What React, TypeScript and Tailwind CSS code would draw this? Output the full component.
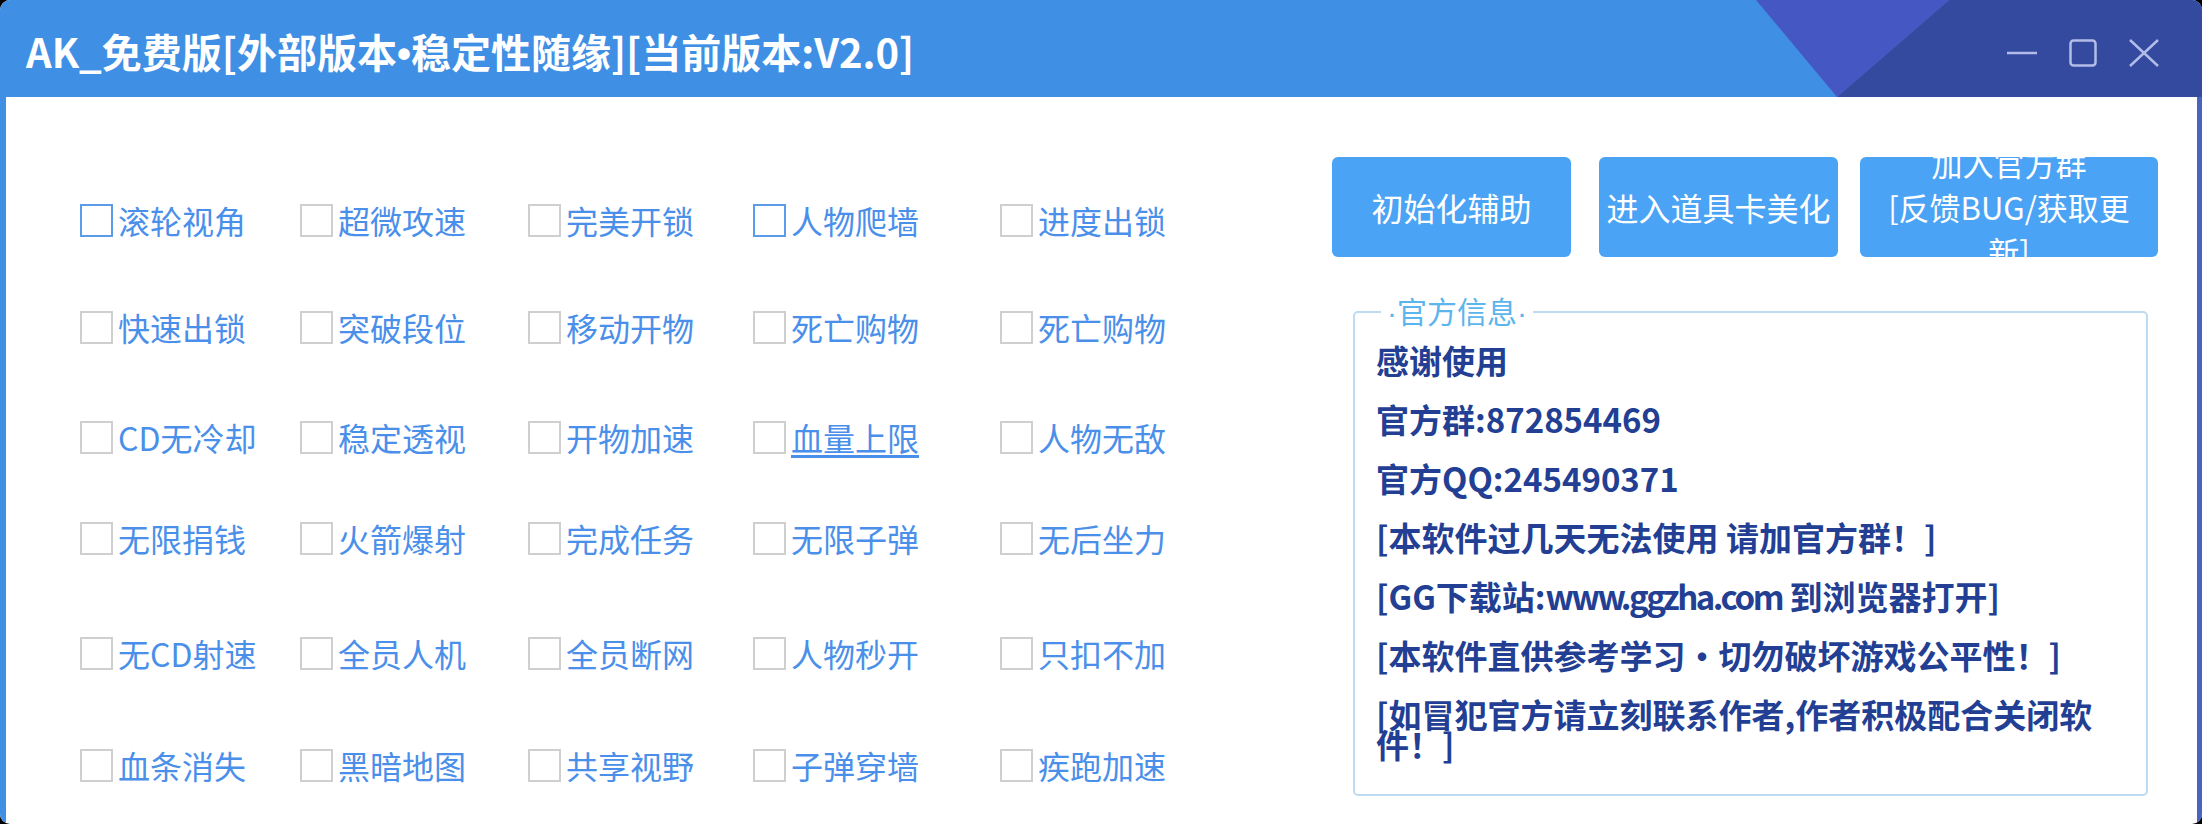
import React from "react";

const ROWS: string[][] = [
  ["滚轮视角", "超微攻速", "完美开锁", "人物爬墙", "进度出锁"],
  ["快速出锁", "突破段位", "移动开物", "死亡购物", "死亡购物"],
  ["CD无冷却", "稳定透视", "开物加速", "血量上限", "人物无敌"],
  ["无限捐钱", "火箭爆射", "完成任务", "无限子弹", "无后坐力"],
  ["无CD射速", "全员人机", "全员断网", "人物秒开", "只扣不加"],
  ["血条消失", "黑暗地图", "共享视野", "子弹穿墙", "疾跑加速"],
];

// vertical spacing between option rows is uneven in the original
const ROW_GAPS = ["mt-0", "mt-[67px]", "mt-[70px]", "mt-[61px]", "mt-[75px]", "mt-[72px]"];

const CJK = { fontFamily: '"Noto Sans CJK SC", "Noto Sans", sans-serif' };
const NARROW = { fontFamily: '"Liberation Sans", sans-serif' };

function Option({ label, focused, underline }: { label: string; focused: boolean; underline: boolean }) {
  return (
    <label className="flex items-center gap-[5px] cursor-pointer">
      <span
        className={`block w-[33px] h-[33px] border-2 bg-white ${
          focused ? "border-[#5b9cea]" : "border-[#cfcfcf]"
        }`}
      />
      <span className={`text-[32px] leading-none text-[#4a8fe9] ${underline ? "underline underline-offset-4" : ""}`}>
        {label}
      </span>
    </label>
  );
}

function WindowControls() {
  return (
    <div className="relative z-10 ml-auto mr-[42px] flex items-center gap-[31px]">
      <svg width="32" height="28" viewBox="0 0 32 28">
        <line x1="1" y1="14" x2="31" y2="14" stroke="#b3bce8" strokeWidth="2.5" />
      </svg>
      <svg width="28" height="28" viewBox="0 0 28 28">
        <rect x="1.5" y="1.5" width="25" height="25" rx="3" fill="none" stroke="#b3bce8" strokeWidth="2.5" />
      </svg>
      <svg width="32" height="28" viewBox="0 0 32 28">
        <path d="M2 1 L30 27 M30 1 L2 27" stroke="#b3bce8" strokeWidth="2.5" fill="none" />
      </svg>
    </div>
  );
}

export default function App() {
  return (
    <div className="w-[2202px] h-[824px] bg-black overflow-hidden" style={CJK}>
      <div className="h-full rounded-[10px] overflow-hidden flex flex-col bg-white">
        {/* Title bar */}
        <header className="relative h-[97px] shrink-0 bg-[#3f8fe5] flex items-center pt-[8px]">
          <svg className="absolute inset-0 w-full h-full" viewBox="0 0 2202 97" preserveAspectRatio="none">
            <polygon points="1756,0 1949,0 1837,97" fill="#4557c3" />
            <polygon points="1949,0 2202,0 2202,97 1837,97" fill="#344a9f" />
          </svg>
          <h1 className="relative z-10 pl-[26px] text-white text-[40px] font-bold leading-none">
            AK_免费版[外部版本<span style={NARROW}>•</span>稳定性随缘][当前版本:V2.0]
          </h1>
          <WindowControls />
        </header>

        {/* Body */}
        <div className="flex-1 flex border-l-[6px] border-l-[#3f8fe5] border-r-[5px] border-r-[#4a63c0]">
          {/* Options */}
          <div className="w-[1326px] shrink-0 pl-[74px] pt-[103px]">
            {ROWS.map((row, r) => (
              <div
                key={r}
                className={`grid grid-cols-[220px_228px_225px_247px_auto] h-[40px] items-center ${ROW_GAPS[r]}`}
              >
                {row.map((label, c) => (
                  <Option
                    key={c}
                    label={label}
                    focused={r === 0 && (c === 0 || c === 3)}
                    underline={r === 2 && c === 3}
                  />
                ))}
              </div>
            ))}
          </div>

          {/* Right panel */}
          <div className="flex-1 pt-[60px]">
            <div className="flex items-start">
              <button className="w-[239px] h-[100px] rounded-[6px] bg-[#4aa3f5] text-white text-[32px] leading-none">
                初始化辅助
              </button>
              <button className="ml-[28px] w-[239px] h-[100px] rounded-[6px] bg-[#4aa3f5] text-white text-[32px] leading-none whitespace-nowrap">
                进入道具卡美化
              </button>
              <button className="ml-[22px] w-[298px] h-[100px] rounded-[6px] bg-[#4aa3f5] text-white text-[31px] leading-[44px] overflow-hidden flex items-center justify-center">
                <span className="block whitespace-nowrap">
                  加入官方群
                  <br />
                  [反馈BUG/获取更
                  <br />
                  新]
                </span>
              </button>
            </div>

            <fieldset className="ml-[21px] mt-[39px] w-[795px] h-[500px] border-2 border-[#bddcf3] rounded-[5px] pl-[21px] pr-[10px] pt-[18px]">
              <legend className="ml-[5px] px-[6px] text-[30px] leading-[28px] text-[#5cb5ec]">
                <span style={NARROW}>·</span>官方信息<span style={NARROW}>·</span>
              </legend>
              <div className="flex flex-col gap-[29px] text-[33px] leading-[30px] font-bold text-[#233f94] whitespace-nowrap">
                <p>感谢使用</p>
                <p>官方群:872854469</p>
                <p>官方QQ:245490371</p>
                <p>[本软件过几天无法使用 请加官方群！]</p>
                <p>
                  [GG下载站:<span className="tracking-[-2.5px]">www.ggzha.com</span> 到浏览器打开]
                </p>
                <p>[本软件直供参考学习·切勿破坏游戏公平性！]</p>
                <p>
                  [如冒犯官方请立刻联系作者,作者积极配合关闭软
                  <br />
                  件！]
                </p>
              </div>
            </fieldset>
          </div>
        </div>
      </div>
    </div>
  );
}
